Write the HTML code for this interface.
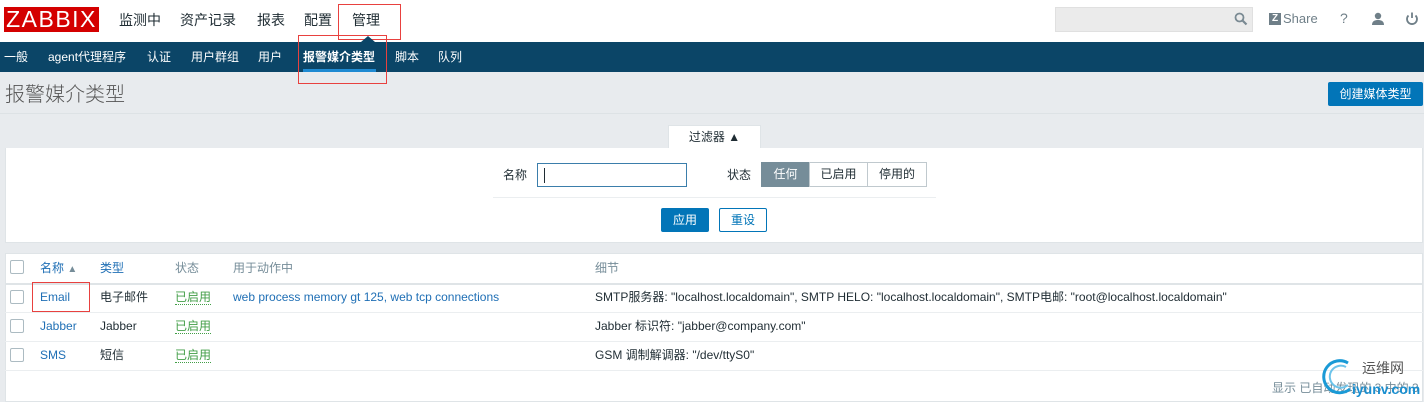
<!DOCTYPE html>
<html><head><meta charset="utf-8"><style>
*{margin:0;padding:0;box-sizing:border-box}
body{width:1424px;height:402px;overflow:hidden;background:#e8ebee;font-family:"Liberation Sans","Noto Sans CJK SC",sans-serif;font-size:12px;color:#1f2c33;position:relative}
.a{position:absolute;white-space:nowrap;line-height:14px}
.hdr{left:0;top:0;width:1424px;height:42px;background:#fff}
.nav{left:0;top:42px;width:1424px;height:30px;background:#0b4567}
.nav span{position:absolute;top:8px;color:#fff;font-size:12px;line-height:14px}
.top{font-size:14px;color:#1f2c33;top:12px;line-height:16px}
.cb{width:14px;height:14px;border:1px solid #acbbc2;border-radius:2px;background:#fff}
.lnk{color:#1f6fb5}
.grn{color:#429e47;border-bottom:1px dotted #429e47;line-height:13px}
.sep{left:5px;width:1418px;height:1px;background:#ebeef0}
</style></head><body>
<div class="a hdr"></div>
<div class="a" style="left:4px;top:7px;width:95px;height:25px;background:#d40000;color:#fff;font-size:23px;line-height:25px;text-align:center;letter-spacing:1.5px">ZABBIX</div>
<div class="a top" style="left:119px">监测中</div>
<div class="a top" style="left:180px">资产记录</div>
<div class="a top" style="left:257px">报表</div>
<div class="a top" style="left:304px">配置</div>
<div class="a top" style="left:352px">管理</div>
<div class="a" style="left:338px;top:4px;width:63px;height:36px;border:1px solid #e8413f"></div>
<div class="a" style="left:1055px;top:7px;width:198px;height:25px;background:#ebebeb;border:1px solid #e0e0e0"></div>
<svg class="a" style="left:1234px;top:12px" width="14" height="14" viewBox="0 0 14 14"><circle cx="5.5" cy="5.5" r="4" fill="none" stroke="#7a8a93" stroke-width="1.8"/><path d="M8.5 8.5L12.5 12.5" stroke="#7a8a93" stroke-width="2.2"/></svg>
<div class="a" style="left:1269px;top:13px;width:12px;height:12px;background:#6f7f88;color:#fff;font-size:10px;font-weight:bold;line-height:12px;text-align:center">Z</div>
<div class="a" style="left:1283px;top:12px;color:#6f7f88;font-size:13px">Share</div>
<div class="a" style="left:1340px;top:11px;color:#6f7f88;font-size:14px">?</div>
<svg class="a" style="left:1371px;top:12px" width="14" height="14" viewBox="0 0 14 14"><circle cx="7" cy="4" r="3.2" fill="#6f7f88"/><path d="M1 13C1 9 4 8 7 8S13 9 13 13Z" fill="#6f7f88"/></svg>
<svg class="a" style="left:1405px;top:11px" width="14" height="15" viewBox="0 0 14 15"><path d="M3.5 4.5A5 5 0 1 0 10.5 4.5" fill="none" stroke="#6f7f88" stroke-width="1.8"/><path d="M7 1.5V7" stroke="#6f7f88" stroke-width="1.8"/></svg>
<div class="a nav">
<span style="left:4px">一般</span><span style="left:48px">agent代理程序</span><span style="left:147px">认证</span><span style="left:191px">用户群组</span><span style="left:258px">用户</span><span style="left:303px;font-weight:bold">报警媒介类型</span><span style="left:395px">脚本</span><span style="left:438px">队列</span>
<div class="a" style="left:303px;top:27px;width:73px;height:3px;background:#1f8ad2"></div>
</div>
<div class="a" style="left:361px;top:36px;width:0;height:0;border-left:7px solid transparent;border-right:7px solid transparent;border-bottom:6px solid #0b4567"></div>
<div class="a" style="left:298px;top:35px;width:89px;height:49px;border:1px solid #e8413f"></div>
<div class="a" style="left:5px;top:83px;font-size:20px;line-height:24px;color:#555;font-weight:300">报警媒介类型</div>
<div class="a" style="left:1328px;top:82px;width:95px;height:24px;background:#0275b8;border-radius:2px;color:#fff;font-size:12px;line-height:24px;text-align:center">创建媒体类型</div>
<div class="a" style="left:0;top:113px;width:1424px;height:1px;background:#dde2e5"></div>
<div class="a" style="left:668px;top:125px;width:93px;height:24px;background:#fff;border:1px solid #dfe4e7;border-bottom:none;text-align:center;line-height:23px">过滤器 ▲</div>
<div class="a" style="left:5px;top:148px;width:1418px;height:95px;background:#fff;border:1px solid #dfe4e7;border-top:none"></div>
<div class="a" style="left:503px;top:168px">名称</div>
<div class="a" style="left:537px;top:163px;width:150px;height:24px;border:1px solid #3b7eab"><div style="position:absolute;left:6px;top:4px;width:1px;height:15px;background:#1f2c33"></div></div>
<div class="a" style="left:727px;top:168px">状态</div>
<div class="a" style="left:761px;top:162px;width:49px;height:25px;background:#768d99;color:#fff;line-height:25px;text-align:center">任何</div>
<div class="a" style="left:809px;top:162px;width:59px;height:25px;border:1px solid #c0c9ce;line-height:23px;text-align:center">已启用</div>
<div class="a" style="left:867px;top:162px;width:60px;height:25px;border:1px solid #c0c9ce;line-height:23px;text-align:center">停用的</div>
<div class="a" style="left:493px;top:197px;width:443px;height:1px;background:#ebeef0"></div>
<div class="a" style="left:661px;top:208px;width:48px;height:24px;background:#0275b8;color:#fff;border-radius:2px;line-height:24px;text-align:center">应用</div>
<div class="a" style="left:719px;top:208px;width:48px;height:24px;border:1px solid #0275b8;color:#0275b8;border-radius:2px;line-height:22px;text-align:center">重设</div>
<div class="a" style="left:5px;top:253px;width:1418px;height:149px;background:#fff;border:1px solid #dfe4e7"></div>
<div class="a cb" style="left:10px;top:260px"></div>
<div class="a lnk" style="left:40px;top:261px">名称 <span style="color:#768d99;font-size:10px">▲</span></div>
<div class="a lnk" style="left:100px;top:261px">类型</div>
<div class="a" style="left:175px;top:261px;color:#768d99">状态</div>
<div class="a" style="left:233px;top:261px;color:#768d99">用于动作中</div>
<div class="a" style="left:595px;top:261px;color:#768d99">细节</div>
<div class="a" style="left:5px;top:283px;width:1418px;height:2px;background:#dfe4e7"></div>
<div class="a cb" style="left:10px;top:290px"></div>
<div class="a lnk" style="left:40px;top:290px">Email</div>
<div class="a" style="left:32px;top:282px;width:58px;height:30px;border:1px solid #e8413f"></div>
<div class="a" style="left:100px;top:290px">电子邮件</div>
<div class="a grn" style="left:175px;top:291px">已启用</div>
<div class="a lnk" style="left:233px;top:290px">web process memory gt 125, web tcp connections</div>
<div class="a" style="left:595px;top:290px">SMTP服务器: "localhost.localdomain", SMTP HELO: "localhost.localdomain", SMTP电邮: "root@localhost.localdomain"</div>
<div class="a sep" style="top:312px"></div>
<div class="a cb" style="left:10px;top:319px"></div>
<div class="a lnk" style="left:40px;top:319px">Jabber</div>
<div class="a" style="left:100px;top:319px">Jabber</div>
<div class="a grn" style="left:175px;top:320px">已启用</div>
<div class="a" style="left:595px;top:319px">Jabber 标识符: "jabber@company.com"</div>
<div class="a sep" style="top:341px"></div>
<div class="a cb" style="left:10px;top:348px"></div>
<div class="a lnk" style="left:40px;top:348px">SMS</div>
<div class="a" style="left:100px;top:348px">短信</div>
<div class="a grn" style="left:175px;top:349px">已启用</div>
<div class="a" style="left:595px;top:348px">GSM 调制解调器: "/dev/ttyS0"</div>
<div class="a sep" style="top:370px"></div>
<div class="a" style="left:1272px;top:381px;color:#768d99">显示 已自动发现的 3 中的 3</div>
<svg class="a" style="left:1318px;top:355px" width="36" height="40" viewBox="0 0 36 40"><path d="M30 8A16 16 0 1 0 32 34" fill="none" stroke="#1a9ad6" stroke-width="3"/><path d="M28 12A11 11 0 1 0 30 30" fill="none" stroke="#6cc3ea" stroke-width="2"/></svg>
<div class="a" style="left:1362px;top:360px;color:#555;font-size:14px;line-height:16px">运维网</div>
<div class="a" style="left:1352px;top:381px;color:#1a8fd0;font-size:14px;font-weight:bold;line-height:16px">iyunv.com</div>
</body></html>
